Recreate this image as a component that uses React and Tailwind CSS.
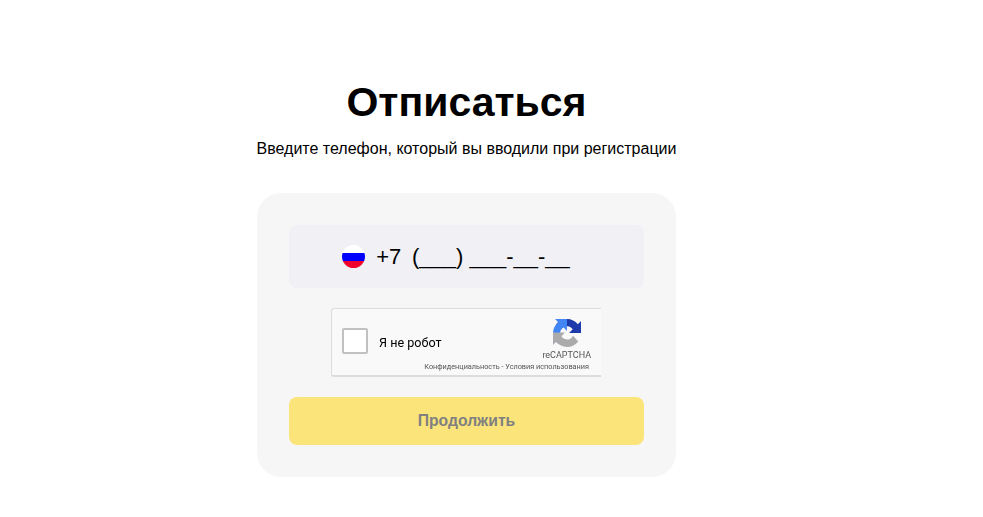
function RussiaFlag() {
  return (
    <div className="flex h-[23px] w-[23px] flex-col overflow-hidden rounded-full">
      <div className="h-2 bg-white" />
      <div className="h-2 bg-[#0000ff]" />
      <div className="h-[7px] bg-[#f0002c]" />
    </div>
  );
}

function RecaptchaLogo() {
  return (
    <svg width="28" height="28" viewBox="0 0 64 64" className="block">
      <path d="M64 31.955l-.033-1.37V4.687l-7.16 7.16C50.948 4.674 42.033.093 32.05.093c-10.4 0-19.622 4.96-25.458 12.64l11.736 11.86a15.55 15.55 0 0 1 4.754-5.334c2.05-1.6 4.952-2.906 8.968-2.906.485 0 .86.057 1.135.163 4.976.393 9.288 3.14 11.828 7.125l-8.307 8.307c10.522-.04 22.4-.066 27.88.01" fill="#1c3aa9" />
      <path d="M31.95.003l-1.37.033H4.687l7.16 7.16C4.674 13.053.093 21.967.093 31.95c0 10.4 4.96 19.622 12.64 25.458l11.86-11.736a15.55 15.55 0 0 1-5.334-4.754c-1.6-2.05-2.906-4.952-2.906-8.968 0-.485.057-.86.163-1.135.393-4.976 3.14-9.288 7.125-11.828l8.307 8.307c-.04-10.522-.066-22.4.01-27.88" fill="#4285f4" />
      <path d="M.004 32.05l.033 1.37v25.895l7.16-7.16c6.053 7.174 14.968 11.755 24.95 11.755 10.4 0 19.622-4.96 25.458-12.64L45.87 38.41a15.55 15.55 0 0 1-4.754 5.334c-2.05 1.6-4.952 2.906-8.968 2.906-.485 0-.86-.057-1.135-.163-4.976-.393-9.288-3.14-11.828-7.125l8.307-8.307c-10.522.04-22.4.066-27.88-.01" fill="#ababab" />
    </svg>
  );
}

function Captcha() {
  return (
    <div className="relative ml-[42px] h-[69px] w-[270px] rounded-l-[3px] border-t border-b-2 border-l border-t-[#dcdcdc] border-b-[#dcdcdc] border-l-[#dcdcdc] bg-[#f9f9f9] blur-[0.3px]">
      <div className="flex h-full items-start pt-[19px] pl-[10px]">
        <div className="h-[26px] w-[26px] rounded-[2px] border-2 border-[#c1c1c1] bg-white" />
        <span className="mt-[6px] ml-[11px] font-['Roboto',sans-serif] text-[12.6px] leading-[17px] text-black">Я не робот</span>
      </div>
      <div className="absolute top-[10px] left-[221px]">
        <RecaptchaLogo />
      </div>
      <div className="absolute top-[40px] right-[10px] font-['Roboto',sans-serif] text-[9px] leading-3 text-[#555]">reCAPTCHA</div>
      <div className="absolute top-[53px] right-[12px] font-['Roboto',sans-serif] text-[7.3px] leading-[10px] whitespace-nowrap text-[#555]">Конфиденциальность - Условия использования</div>
    </div>
  );
}

export default function App() {
  return (
    <div className="min-h-[517px] w-[933px] bg-white pt-[75px] font-['Liberation_Sans',sans-serif] text-black">
      <h1 className="text-center text-[41px] leading-[54px] font-bold">Отписаться</h1>
      <p className="mt-[10px] text-center text-base leading-5">Введите телефон, который вы вводили при регистрации</p>
      <div className="mx-auto mt-[34px] flex h-[284px] w-[419px] flex-col rounded-[24px] bg-[#f6f6f7] p-8">
        <div className="flex h-[63px] items-center justify-center gap-[11px] rounded-lg bg-[#f0f0f5] pr-[21px]">
          <RussiaFlag />
          <span className="text-[22px] leading-7 whitespace-pre">
            +7 <span className="ml-[4.5px]">(___) ___-__-__</span>
          </span>
        </div>
        <div className="mt-5">
          <Captcha />
        </div>
        <button className="mt-5 h-12 w-full rounded-lg bg-[#fbe57b] text-[15.7px] font-bold text-[#808080]">Продолжить</button>
      </div>
    </div>
  );
}
